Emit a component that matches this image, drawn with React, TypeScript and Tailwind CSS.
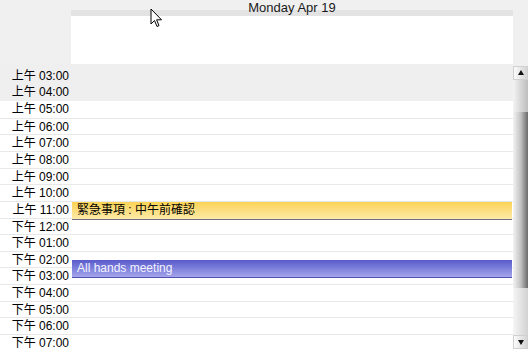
import React from 'react';

const hours = [
  '上午 03:00', '上午 04:00', '上午 05:00', '上午 06:00', '上午 07:00', '上午 08:00',
  '上午 09:00', '上午 10:00', '上午 11:00', '下午 12:00', '下午 01:00', '下午 02:00',
  '下午 03:00', '下午 04:00', '下午 05:00', '下午 06:00', '下午 07:00',
];

const Arrow: React.FC<{ down?: boolean }> = ({ down }) => (
  <div className="h-[14px] flex items-center justify-center bg-gradient-to-r from-[#fbfbfb] to-[#d4d4d4] border border-[#d0d0d0]">
    <svg width="6" height="6" viewBox="0 0 6 6">
      {down ? <polygon points="0,1 6,1 3,6" fill="#111" /> : <polygon points="0,5 6,5 3,0" fill="#111" />}
    </svg>
  </div>
);

const App: React.FC = () => {
  return (
    <div className="relative w-[528px] h-[349px] overflow-hidden bg-[#f0f0f0] text-[12px] text-black font-['Liberation_Sans','Noto_Sans_CJK_TC',sans-serif]">
      {/* day header */}
      <div className="flex h-[64px]">
        <div className="w-[71px]" />
        <div className="w-[442px] flex flex-col">
          <div className="relative z-10 h-[10px] text-center text-[13px] leading-[15px] text-[#1a1a1a]">
            Monday Apr 19
          </div>
          <div className="h-[6px] bg-[#e3e3e3]" />
          <div className="flex-1 bg-white" />
        </div>
      </div>

      {/* hour grid */}
      <div className="flex h-[285px]">
        <div className="relative w-[513px] overflow-hidden pt-[3.6px] bg-white">
          <div className="absolute left-0 right-0 top-0 h-[37px] bg-[#efefef]" />
          {hours.map((h, i) => (
            <div
              key={h}
              className={
                i < 2
                  ? 'relative flex h-[16.67px] bg-[#efefef]'
                  : i === 2
                  ? 'relative flex h-[16.67px] bg-white'
                  : 'relative flex h-[16.67px] bg-white border-t border-[#e8e8e8]'
              }
            >
              <div className="w-[71px] pr-[2px] text-right leading-[16px] whitespace-nowrap">{h}</div>
              <div className="flex-1" />
            </div>
          ))}

          <div className="absolute left-[72px] w-[440px] top-[138px] h-[18px] bg-gradient-to-b from-[#fcd352] to-[#fdeaa6] border-b border-[#6d6d88] pl-[5px] leading-[17px] text-black">
            緊急事項 : 中午前確認
          </div>
          <div className="absolute left-[72px] w-[440px] top-[196px] h-[18px] bg-gradient-to-b from-[#5a5acb] to-[#a4a4ea] border-b border-[#5252b2] pl-[5px] leading-[17px] text-[#f4f4ff]">
            All hands meeting
          </div>
        </div>

        {/* scrollbar */}
        <div className="w-[15px] flex flex-col">
          <div className="h-[2px]" />
          <Arrow />
          <div className="h-[32px] bg-gradient-to-r from-[#f4f4f4] to-[#bdbdbd]" />
          <div className="h-[176px] bg-gradient-to-r from-[#f4f4f4] via-[#c4c4c4] to-[#6c6c6c]" />
          <div className="flex-1 bg-gradient-to-r from-[#f6f6f6] to-[#d2d2d2]" />
          <Arrow down />
        </div>
      </div>

      {/* mouse pointer */}
      <svg className="absolute left-[150px] top-[8px]" width="13" height="21" viewBox="0 0 13 21">
        <path d="M1 1 L1 16 L4.5 12.5 L7 18.5 L9 17.6 L6.6 11.8 L11.5 11.8 Z" fill="#fff" stroke="#000" strokeWidth="1" strokeLinejoin="round" />
      </svg>
    </div>
  );
};

export default App;
